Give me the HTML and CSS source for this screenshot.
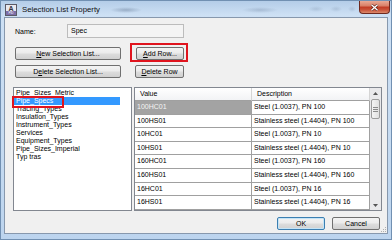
FILE: index.html
```html
<!DOCTYPE html>
<html>
<head>
<link rel="stylesheet" href="styles.css">
</head>
<body>

<div class="window">

  <!-- Title bar -->
  <div class="titlebar">
    <svg class="app-icon" width="12" height="12" viewBox="0 0 12 12">
      <rect x="0.5" y="0.5" width="11" height="11" fill="#e8e8ee" stroke="#5a5a66"/>
      <rect x="1" y="7" width="10" height="4" fill="#7d6fa8"/>
      <text x="6" y="6.6" font-family="Liberation Sans, sans-serif" font-size="7" font-weight="bold" fill="#33333d" text-anchor="middle">A</text>
      <text x="6" y="10.4" font-family="Liberation Sans, sans-serif" font-size="3" fill="#fff" text-anchor="middle">PID</text>
    </svg>
    <span class="title">Selection List Property</span>
    <div class="close-btn">
      <svg width="9" height="7" viewBox="0 0 9 7">
        <path d="M1.5 0.8 L7.5 6.2 M7.5 0.8 L1.5 6.2" stroke="#5a1a10" stroke-width="2.6"/>
        <path d="M1.5 0.8 L7.5 6.2 M7.5 0.8 L1.5 6.2" stroke="#fff" stroke-width="1.4"/>
      </svg>
    </div>
  </div>

  <!-- Dialog content -->
  <div class="client">

    <div class="name-row">
      <label class="name-label">Name:</label>
      <div class="name-input">Spec</div>
    </div>

    <div class="btn-row row-a">
      <button class="btn btn-wide" type="button"><u>N</u>ew Selection List...</button>
      <span class="mark-box">
        <button class="btn btn-add" type="button"><u>A</u>dd Row...</button>
      </span>
    </div>

    <div class="btn-row row-b">
      <button class="btn btn-wide" type="button">D<u>e</u>lete Selection List...</button>
      <button class="btn btn-del" type="button"><u>D</u>elete Row</button>
    </div>

    <div class="lists">
      <div class="listbox">
        <div class="item">Pipe_Sizes_Metric</div>
        <div class="item sel">Pipe_Specs</div>
        <div class="item">Tracing_Types</div>
        <div class="item">Insulation_Types</div>
        <div class="item">Instrument_Types</div>
        <div class="item">Services</div>
        <div class="item">Equipment_Types</div>
        <div class="item">Pipe_Sizes_Imperial</div>
        <div class="item">Typ tras</div>
        <!-- annotation box drawn over the selected item -->
        <div class="mark-item"></div>
      </div>

      <div class="grid">
        <div class="cells">
          <div class="hrow">
            <div class="hcell col-v">Value</div>
            <div class="hcell col-d">Description</div>
          </div>
          <div class="brow">
            <div class="bcell col-v cur">100HC01</div>
            <div class="bcell col-d">Steel (1.0037), PN 100</div>
          </div>
          <div class="brow">
            <div class="bcell col-v">100HS01</div>
            <div class="bcell col-d">Stainless steel (1.4404), PN 100</div>
          </div>
          <div class="brow">
            <div class="bcell col-v">10HC01</div>
            <div class="bcell col-d">Steel (1.0037), PN 10</div>
          </div>
          <div class="brow">
            <div class="bcell col-v">10HS01</div>
            <div class="bcell col-d">Stainless steel (1.4404), PN 10</div>
          </div>
          <div class="brow">
            <div class="bcell col-v">160HC01</div>
            <div class="bcell col-d">Steel (1.0037), PN 160</div>
          </div>
          <div class="brow">
            <div class="bcell col-v">160HS01</div>
            <div class="bcell col-d">Stainless steel (1.4404), PN 160</div>
          </div>
          <div class="brow">
            <div class="bcell col-v">16HC01</div>
            <div class="bcell col-d">Steel (1.0037), PN 16</div>
          </div>
          <div class="brow">
            <div class="bcell col-v">16HS01</div>
            <div class="bcell col-d">Stainless steel (1.4404), PN 16</div>
          </div>
        </div>

        <!-- vertical scrollbar -->
        <div class="vscroll">
          <div class="sb-arrow">
            <svg width="5" height="3" viewBox="0 0 5 3"><path d="M0 3 L2.5 0 L5 3 Z" fill="#555"/></svg>
          </div>
          <div class="sb-thumb">
            <span class="grip"></span>
            <span class="grip"></span>
            <span class="grip"></span>
          </div>
          <div class="sb-track"></div>
          <div class="sb-arrow">
            <svg width="5" height="3" viewBox="0 0 5 3"><path d="M0 0 L5 0 L2.5 3 Z" fill="#555"/></svg>
          </div>
        </div>
      </div>
    </div>

    <div class="footer">
      <button class="btn btn-foot btn-default" type="button">OK</button>
      <button class="btn btn-foot" type="button">Cancel</button>
    </div>

    <!-- resize grip -->
    <svg class="size-grip" width="8" height="8" viewBox="0 0 8 8">
      <rect x="6" y="2" width="1" height="1" fill="#b0b0b0"/>
      <rect x="4" y="4" width="1" height="1" fill="#b0b0b0"/>
      <rect x="6" y="4" width="1" height="1" fill="#b0b0b0"/>
      <rect x="2" y="6" width="1" height="1" fill="#b0b0b0"/>
      <rect x="4" y="6" width="1" height="1" fill="#b0b0b0"/>
      <rect x="6" y="6" width="1" height="1" fill="#b0b0b0"/>
    </svg>
  </div>

</div>

</body>
</html>
```

FILE: styles.css
```css
body {
    margin: 0;
    font-family: "Liberation Sans", Arial, sans-serif;
    font-size: 7px;
    color: #000;
    background: #c9dcf0;
}

/* The window frame */
.window {
    width: 392px;
    height: 240px;
    box-sizing: border-box;
    border: 1px solid #7190b2;
    padding: 0 3px 5px 3px;
    display: flex;
    flex-direction: column;
    background: linear-gradient(#b4cde8, #cde0f4 14px, #c6dbf1 60%, #bcd4ee);
}

/* Title bar, with the blurred glass behind it */
.titlebar {
    height: 16px;
    display: flex;
    align-items: center;
    background:
        radial-gradient(ellipse 16px 3px at 122px 9px, rgba(70, 90, 120, 0.35), transparent),
        radial-gradient(ellipse 18px 3px at 256px 9px, rgba(80, 100, 130, 0.25), transparent),
        radial-gradient(ellipse 8px 3px at 312px 8px, rgba(90, 110, 140, 0.2), transparent),
        radial-gradient(ellipse 6px 3px at 332px 8px, rgba(90, 110, 140, 0.2), transparent),
        radial-gradient(ellipse 4px 3px at 348px 8px, rgba(90, 110, 140, 0.2), transparent);
}

.app-icon {
    margin-left: 1px;
    margin-top: 1px;
}

.title {
    margin-left: 5px;
    font-size: 7.8px;
    color: #111;
}

.close-btn {
    margin-left: auto;
    margin-right: -2px;
    align-self: flex-start;
    width: 31px;
    height: 13px;
    box-sizing: border-box;
    border: 1px solid #6e2a20;
    border-top: none;
    border-radius: 0 0 4px 4px;
    background: linear-gradient(#e9a996, #d98068 40%, #c23d26 52%, #c9553b 75%, #dc8a6c);
    display: flex;
    align-items: center;
    justify-content: center;
}

/* Dialog body */
.client {
    position: relative;
    height: 217px;
    box-sizing: border-box;
    border: 1px solid #8798ad;
    background: #f0f0f0;
    padding: 6px 5px 3px 8px;
    display: flex;
    flex-direction: column;
}

.name-row {
    display: flex;
    align-items: center;
    height: 14px;
    padding-left: 2px;
}

.name-label {
    width: 52px;
}

.name-input {
    width: 117px;
    height: 14px;
    box-sizing: border-box;
    border: 1px solid #bcbcbc;
    background: #f4f4f4;
    padding-left: 3px;
    line-height: 12px;
}

/* Buttons */
.btn {
    box-sizing: border-box;
    height: 13px;
    padding: 0;
    margin: 0;
    border: 1px solid #707070;
    border-radius: 2px;
    background: linear-gradient(#f3f3f3, #ebebeb 48%, #dddddd 52%, #d0d0d0);
    font-family: "Liberation Sans", Arial, sans-serif;
    font-size: 7px;
    line-height: 11px;
    color: #000;
    text-align: center;
}

.btn-row {
    display: flex;
    align-items: flex-start;
}

.row-a {
    margin-top: 5px;
}

.row-b {
    margin-top: 3px;
}

.btn-wide {
    margin-left: 2px;
    width: 106px;
}

.row-a .btn-wide {
    margin-top: 4px;
}

/* red annotation frame round "Add Row..." */
.mark-box {
    margin-left: 9px;
    border: 2px solid #e0141e;
    padding: 2px 2px 0 4px;
    display: flex;
}

.btn-add {
    width: 48px;
}

.btn-del {
    margin-left: 14px;
    width: 49px;
}

/* Lists */
.lists {
    display: flex;
    gap: 2px;
    height: 124px;
    margin-top: 9px;
}

.listbox {
    position: relative;
    width: 119px;
    box-sizing: border-box;
    border: 1px solid #828790;
    background: #fff;
    padding-top: 1px;
}

.item {
    height: 8px;
    line-height: 8px;
    padding-left: 2px;
    white-space: nowrap;
}

.item.sel {
    width: 106px;
    box-sizing: border-box;
    background: #3399ff;
    color: #fff;
}

.mark-item {
    position: absolute;
    left: -2px;
    top: 8px;
    width: 52px;
    height: 12px;
    box-sizing: border-box;
    border: 2px solid #e0141e;
}

/* Grid */
.grid {
    width: 248px;
    box-sizing: border-box;
    border: 1px solid #828790;
    background: #fff;
    display: flex;
}

.cells {
    width: 235px;
    display: flex;
    flex-direction: column;
}

.hrow {
    display: flex;
    height: 13px;
}

.brow {
    display: flex;
    height: 13.6px;
}

.col-v {
    width: 117px;
}

.col-d {
    width: 118px;
}

.hcell {
    box-sizing: border-box;
    border-right: 1px solid #d5d5d5;
    border-bottom: 1px solid #a0a0a0;
    background: linear-gradient(#ffffff, #f2f3f5);
    padding-left: 5px;
    line-height: 12px;
}

.bcell {
    box-sizing: border-box;
    border-right: 1px solid #a0a0a0;
    border-bottom: 1px solid #a0a0a0;
    padding-left: 2px;
    line-height: 12.6px;
    white-space: nowrap;
    overflow: hidden;
}

.bcell.cur {
    background: #a3a3a3;
    color: #f4f4f4;
}

/* Scrollbar */
.vscroll {
    width: 11px;
    background: #e9e9eb;
    display: flex;
    flex-direction: column;
}

.sb-arrow {
    height: 10px;
    display: flex;
    align-items: center;
    justify-content: center;
}

.sb-thumb {
    margin: 1px 1px 0 1px;
    height: 20px;
    box-sizing: border-box;
    border: 1px solid #9c9c9c;
    border-radius: 2px;
    background: linear-gradient(90deg, #f4f4f4, #e0e0e0);
    display: flex;
    flex-direction: column;
    align-items: center;
    justify-content: center;
    gap: 1px;
}

.grip {
    width: 5px;
    height: 1px;
    background: #8a8a8a;
}

.sb-track {
    flex: 1;
}

/* OK / Cancel */
.footer {
    display: flex;
    justify-content: flex-end;
    gap: 7px;
    margin-top: 6px;
    padding-right: 2px;
}

.btn-foot {
    width: 48px;
}

.btn-default {
    border-color: #3c7fb1;
    box-shadow: inset 0 0 0 1px #c4e4f7;
}

.size-grip {
    position: absolute;
    right: 0;
    bottom: 0;
}
```
